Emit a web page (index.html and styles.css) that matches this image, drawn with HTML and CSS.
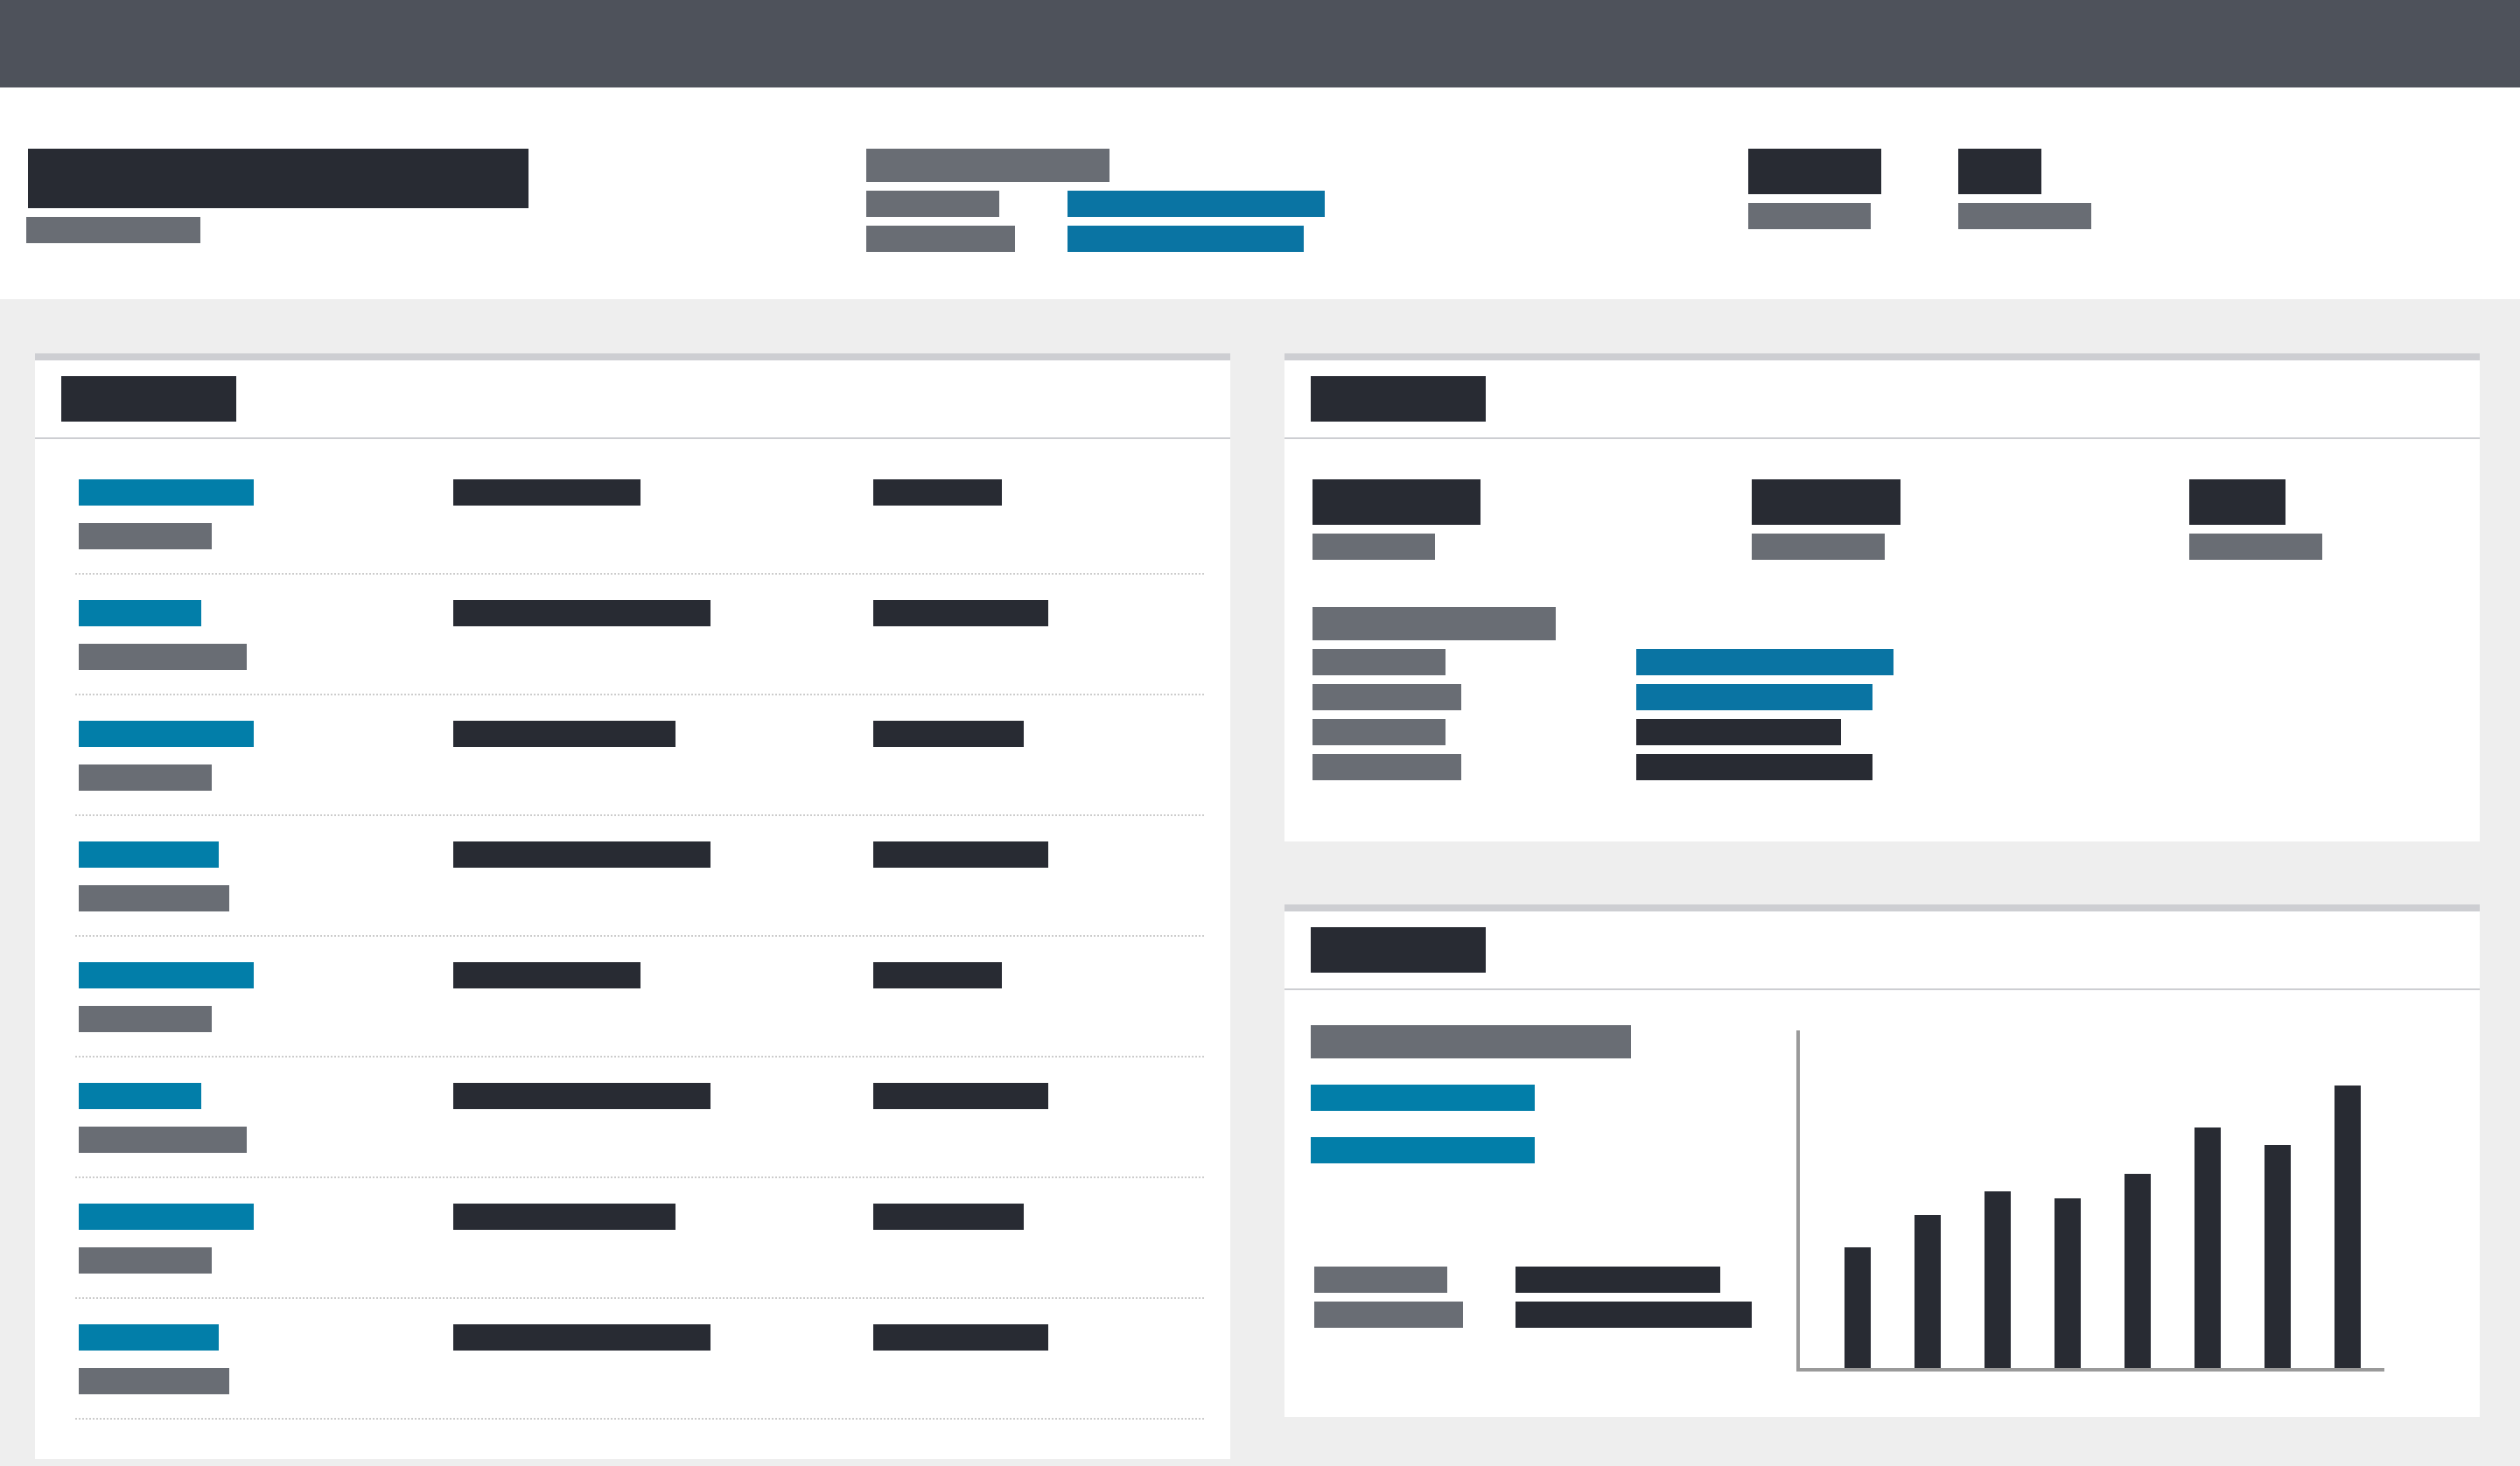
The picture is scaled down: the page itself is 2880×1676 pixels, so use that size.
FILE: index.html
```html
<!DOCTYPE html>
<html lang="en">
<head>
<meta charset="utf-8">
<title>Dashboard</title>
<link rel="stylesheet" href="styles.css">
</head>
<body>
<header class="topbar"></header>

<section class="hero">
  <div class="hero-title">
    <div class="blk dark title-xl"></div>
    <div class="blk gray h30 w199 sub-offset"></div>
  </div>
  <div class="hero-meta">
    <div class="blk gray h38 w278"></div>
    <div class="meta-grid">
      <div class="blk gray h30 w152"></div>
      <div class="blk hblue h30 w294"></div>
      <div class="blk gray h30 w170"></div>
      <div class="blk hblue h30 w270"></div>
    </div>
  </div>
  <div class="hero-stat">
    <div class="blk dark h52 w152"></div>
    <div class="blk gray h30 w140"></div>
  </div>
  <div class="hero-stat">
    <div class="blk dark h52 w95"></div>
    <div class="blk gray h30 w152"></div>
  </div>
</section>

<main class="main">
  <section class="panel panel-list">
    <div class="panel-head"><div class="blk dark h52 w200"></div></div>
    <div class="list">
      <div class="row">
        <div class="cell"><div class="blk blue h30 w200"></div><div class="blk gray h30 w152"></div></div>
        <div class="blk dark h30 w214"></div>
        <div class="blk dark h30 w147"></div>
      </div>
      <div class="row">
        <div class="cell"><div class="blk blue h30 w140"></div><div class="blk gray h30 w192"></div></div>
        <div class="blk dark h30 w294"></div>
        <div class="blk dark h30 w200"></div>
      </div>
      <div class="row">
        <div class="cell"><div class="blk blue h30 w200"></div><div class="blk gray h30 w152"></div></div>
        <div class="blk dark h30 w254"></div>
        <div class="blk dark h30 w172"></div>
      </div>
      <div class="row">
        <div class="cell"><div class="blk blue h30 w160"></div><div class="blk gray h30 w172"></div></div>
        <div class="blk dark h30 w294"></div>
        <div class="blk dark h30 w200"></div>
      </div>
      <div class="row">
        <div class="cell"><div class="blk blue h30 w200"></div><div class="blk gray h30 w152"></div></div>
        <div class="blk dark h30 w214"></div>
        <div class="blk dark h30 w147"></div>
      </div>
      <div class="row">
        <div class="cell"><div class="blk blue h30 w140"></div><div class="blk gray h30 w192"></div></div>
        <div class="blk dark h30 w294"></div>
        <div class="blk dark h30 w200"></div>
      </div>
      <div class="row">
        <div class="cell"><div class="blk blue h30 w200"></div><div class="blk gray h30 w152"></div></div>
        <div class="blk dark h30 w254"></div>
        <div class="blk dark h30 w172"></div>
      </div>
      <div class="row">
        <div class="cell"><div class="blk blue h30 w160"></div><div class="blk gray h30 w172"></div></div>
        <div class="blk dark h30 w294"></div>
        <div class="blk dark h30 w200"></div>
      </div>
    </div>
  </section>

  <div class="side">
    <section class="panel panel-stats">
      <div class="panel-head"><div class="blk dark h52 w200"></div></div>
      <div class="stats-body">
        <div class="stats">
          <div class="stat"><div class="blk dark h52 w192"></div><div class="blk gray h30 w140"></div></div>
          <div class="stat"><div class="blk dark h52 w170"></div><div class="blk gray h30 w152"></div></div>
          <div class="stat"><div class="blk dark h52 w110"></div><div class="blk gray h30 w152"></div></div>
        </div>
        <div class="detail">
          <div class="blk gray h38 w278"></div>
          <div class="detail-grid">
            <div class="blk gray h30 w152"></div><div class="blk hblue h30 w294"></div>
            <div class="blk gray h30 w170"></div><div class="blk hblue h30 w270"></div>
            <div class="blk gray h30 w152"></div><div class="blk dark h30 w234"></div>
            <div class="blk gray h30 w170"></div><div class="blk dark h30 w270"></div>
          </div>
        </div>
      </div>
    </section>

    <section class="panel panel-chart">
      <div class="panel-head"><div class="blk dark h52 w200"></div></div>
      <div class="chart-body">
        <div class="chart-info">
          <div class="blk gray h38 w366"></div>
          <div class="blk blue h30 w256 mt30"></div>
          <div class="blk blue h30 w256 mt30"></div>
          <div class="legend">
            <div class="blk gray h30 w152"></div><div class="blk dark h30 w234"></div>
            <div class="blk gray h30 w170"></div><div class="blk dark h30 w270"></div>
          </div>
        </div>
        <div class="chart">
          <div class="bar" style="height:138px"></div>
          <div class="bar" style="height:175px"></div>
          <div class="bar" style="height:202px"></div>
          <div class="bar" style="height:194px"></div>
          <div class="bar" style="height:222px"></div>
          <div class="bar" style="height:275px"></div>
          <div class="bar" style="height:255px"></div>
          <div class="bar" style="height:323px"></div>
        </div>
      </div>
    </section>
  </div>
</main>
</body>
</html>
```

FILE: styles.css
```css
* { box-sizing: border-box; }

html, body {
  margin: 0;
  padding: 0;
  background: #eeeeee;
  font-family: "Liberation Sans", Arial, sans-serif;
}

body {
  width: 2880px;
  height: 1676px;
  overflow: hidden;
}

.blk { flex: none; }
.dark { background: #282b33; }
.gray { background: #696d74; }
.blue { background: #027ea9; }
.hblue { background: #0a74a3; }

.h30 { height: 30px; }
.h38 { height: 38px; }
.h52 { height: 52px; }

.w95 { width: 95px; }
.w110 { width: 110px; }
.w140 { width: 140px; }
.w147 { width: 147px; }
.w152 { width: 152px; }
.w160 { width: 160px; }
.w170 { width: 170px; }
.w172 { width: 172px; }
.w192 { width: 192px; }
.w199 { width: 199px; }
.w200 { width: 200px; }
.w214 { width: 214px; }
.w234 { width: 234px; }
.w254 { width: 254px; }
.w256 { width: 256px; }
.w270 { width: 270px; }
.w278 { width: 278px; }
.w294 { width: 294px; }
.w366 { width: 366px; }
.mt30 { margin-top: 30px; }

/* Top bar */
.topbar {
  height: 100px;
  background: #4e525b;
}

/* Hero */
.hero {
  height: 242px;
  background: #ffffff;
  padding: 70px 0 0 30px;
  display: grid;
  grid-template-columns: 960px 1008px 240px auto;
  align-items: start;
}

.hero-title {
  display: flex;
  flex-direction: column;
  gap: 10px;
}

.title-xl {
  width: 572px;
  height: 68px;
  margin-left: 2px;
}

.hero-meta {
  display: flex;
  flex-direction: column;
  gap: 10px;
}

.meta-grid {
  display: grid;
  grid-template-columns: 230px auto;
  row-gap: 10px;
  justify-items: start;
}

.hero-stat {
  display: flex;
  flex-direction: column;
  gap: 10px;
}

/* Main */
.main {
  padding: 62px 46px 0 40px;
  display: grid;
  grid-template-columns: 1366px 1366px;
  column-gap: 62px;
  align-items: start;
}

.panel {
  background: #ffffff;
  border-top: 8px solid #cdced2;
}

.panel-head {
  height: 90px;
  padding: 18px 30px;
  border-bottom: 2px solid #cdced2;
}

/* List panel */
.list {
  padding: 17px 30px 45px 46px;
}

.row {
  display: grid;
  grid-template-columns: 428px 480px 1fr;
  align-items: start;
  padding: 29px 0 27px 4px;
  border-bottom: 2px dotted #cccccc;
}

.cell {
  display: flex;
  flex-direction: column;
  gap: 20px;
}

/* Right side */
.side {
  display: flex;
  flex-direction: column;
  gap: 72px;
}

.stats-body {
  padding: 46px 32px 70px;
}

.stats {
  display: grid;
  grid-template-columns: 502px 500px auto;
}

.stat {
  display: flex;
  flex-direction: column;
  gap: 10px;
}

.detail {
  margin-top: 54px;
  display: flex;
  flex-direction: column;
  gap: 10px;
}

.detail-grid {
  display: grid;
  grid-template-columns: 370px auto;
  row-gap: 10px;
  justify-items: start;
}

/* Chart panel */
.chart-body {
  padding: 40px 30px 52px;
  display: grid;
  grid-template-columns: 555px 672px;
  align-items: start;
}

.chart-info {
  display: flex;
  flex-direction: column;
}

.legend {
  margin-top: 118px;
  margin-left: 4px;
  display: grid;
  grid-template-columns: 230px auto;
  row-gap: 10px;
  justify-items: start;
}

.chart {
  margin-top: 6px;
  height: 390px;
  border-left: 4px solid #9a9a9a;
  border-bottom: 4px solid #9a9a9a;
  display: flex;
  align-items: flex-end;
  gap: 50px;
  padding-left: 51px;
}

.bar {
  width: 30px;
  background: #282b33;
}
```
